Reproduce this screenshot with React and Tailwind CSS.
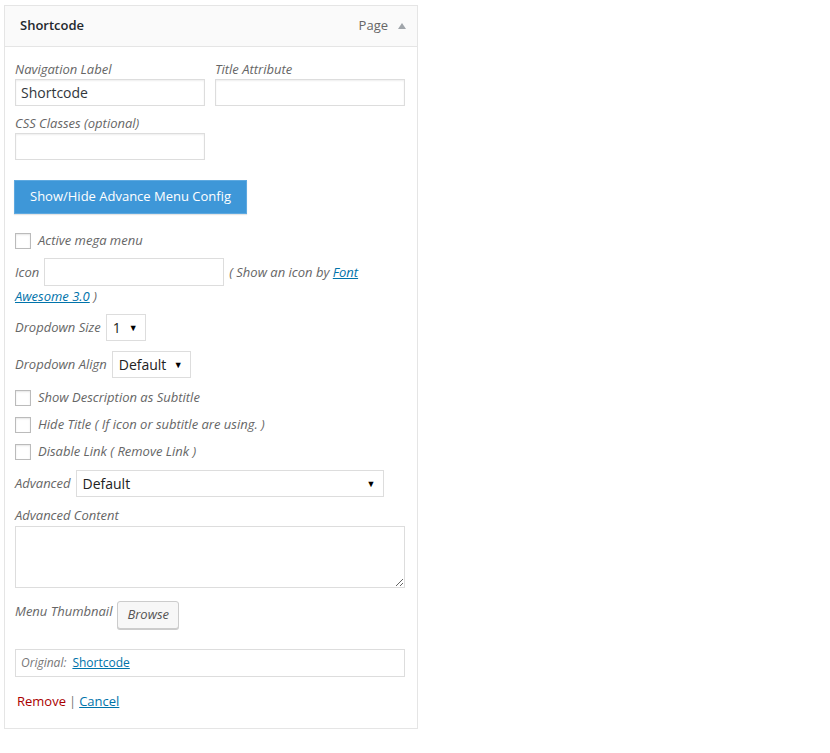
import React from 'react';

const font = { fontFamily: '"Open Sans", "Noto Sans", sans-serif' };

function Label({ children, className = '' }) {
  return <span className={`text-[13px] italic text-[#666] leading-[19px] ${className}`}>{children}</span>;
}

function TextBox({ className = '', value = '' }) {
  return (
    <div className={`h-[27px] border border-[#ddd] bg-white shadow-[inset_0_1px_2px_rgba(0,0,0,0.07)] px-[5px] flex items-center text-[14px] text-[#32373c] ${className}`}>
      {value}
    </div>
  );
}

function FakeSelect({ value, className = '' }) {
  return (
    <div className={`h-[27px] border border-[#ddd] bg-white flex items-center justify-between pl-[6px] pr-[7px] text-[14px] text-[#222] ${className}`}>
      <span>{value}</span>
      <span className="text-[9px] text-black leading-none">▼</span>
    </div>
  );
}

function Check({ label }) {
  return (
    <div className="flex items-center gap-[7px] h-[27px]">
      <div className="w-[16px] h-[16px] border border-[#bbb] bg-white shadow-[inset_0_1px_2px_rgba(0,0,0,0.1)]" />
      <Label>{label}</Label>
    </div>
  );
}

export default function App() {
  return (
    <div className="min-h-screen bg-white pl-[4px] pt-[5px]" style={font}>
      <div className="w-[414px] border border-[#e5e5e5] bg-white">
        {/* header */}
        <div className="h-[41px] bg-[#fafafa] border-b border-[#e5e5e5] flex items-center justify-between pl-[15px] pr-[11px]">
          <span className="text-[13px] font-semibold text-[#23282d]">Shortcode</span>
          <div className="flex items-center gap-[10px]">
            <span className="text-[13px] text-[#666]">Page</span>
            <svg width="8" height="6" viewBox="0 0 8 6"><path d="M0 6 L4 0 L8 6 Z" fill="#a0a5aa" /></svg>
          </div>
        </div>

        {/* body */}
        <div className="pl-[10px] pr-[12px] pt-[13px] pb-[16px]">
          <div className="grid grid-cols-2 gap-x-[10px]">
            <div className="flex flex-col">
              <Label>Navigation Label</Label>
              <TextBox value="Shortcode" />
            </div>
            <div className="flex flex-col">
              <Label>Title Attribute</Label>
              <TextBox />
            </div>
            <div className="flex flex-col mt-[8px]">
              <Label>CSS Classes (optional)</Label>
              <TextBox />
            </div>
          </div>

          <button className="mt-[20px] -ml-[1px] h-[34px] px-[15px] bg-[#3e97d8] border border-[#5ea9e0] text-white text-[13px] shadow-[0_1px_1px_rgba(0,0,0,0.1)]">
            Show/Hide Advance Menu Config
          </button>

          <div className="mt-[13px]">
            <Check label="Active mega menu" />
          </div>

          {/* icon row */}
          <div className="mt-[4px] flex flex-col">
            <div className="flex items-center h-[28px] gap-[5px]">
              <Label>Icon</Label>
              <div className="w-[180px] h-[28px] border border-[#ddd] bg-white" />
              <Label>
                ( Show an icon by <a href="#" className="text-[#0073aa] underline">Font</a>
              </Label>
            </div>
            <Label className="leading-[20px]">
              <a href="#" className="text-[#0073aa] underline">Awesome 3.0</a> )
            </Label>
          </div>

          <div className="mt-[8px] flex items-center gap-[5px]">
            <Label>Dropdown Size</Label>
            <FakeSelect value="1" className="w-[40px]" />
          </div>

          <div className="mt-[10px] flex items-center gap-[5px]">
            <Label>Dropdown Align</Label>
            <FakeSelect value="Default" className="w-[79px]" />
          </div>

          <div className="mt-[6px] flex flex-col">
            <Check label="Show Description as Subtitle" />
            <Check label="Hide Title ( If icon or subtitle are using. )" />
            <Check label="Disable Link ( Remove Link )" />
          </div>

          <div className="mt-[5px] flex items-center gap-[5px]">
            <Label>Advanced</Label>
            <FakeSelect value="Default" className="w-[308px]" />
          </div>

          <div className="mt-[9px] flex flex-col">
            <Label>Advanced Content</Label>
            <textarea className="mt-[1px] w-[390px] h-[62px] border border-[#ddd] bg-white resize-y outline-none" />
          </div>

          <div className="mt-[13px] flex items-start gap-[5px]">
            <Label className="mt-[1px]">Menu Thumbnail</Label>
            <button className="h-[28px] px-[9px] bg-[#f7f7f7] border border-[#ccc] rounded-[3px] shadow-[0_1px_0_#ccc] text-[13px] italic text-[#555]">
              Browse
            </button>
          </div>

          <div className="mt-[20px] h-[28px] border border-[#ddd] flex items-center px-[5px] text-[12px]">
            <span className="italic text-[#777]">Original:</span>
            <a href="#" className="ml-[6px] text-[#0073aa] underline">Shortcode</a>
          </div>

          <div className="mt-[15px] flex items-center text-[13px] pl-[2px]">
            <a href="#" className="text-[#a00] no-underline">Remove</a>
            <span className="mx-[3px] text-[#777]">|</span>
            <a href="#" className="text-[#0073aa] underline">Cancel</a>
          </div>
        </div>
      </div>
    </div>
  );
}
